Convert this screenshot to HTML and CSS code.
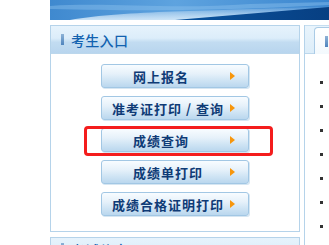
FILE: index.html
```html
<!DOCTYPE html>
<html lang="zh-CN">
<head>
<meta charset="utf-8">
<title>考生入口</title>
<link rel="stylesheet" href="styles.css">
</head>
<body>
<div class="page">
  <div class="banner">
    <svg width="279" height="20" viewBox="0 0 279 20" preserveAspectRatio="none">
      <defs>
        <linearGradient id="sky" x1="0" y1="0" x2="1" y2="0">
          <stop offset="0" stop-color="#3f89cf"/>
          <stop offset="0.45" stop-color="#5ea3df"/>
          <stop offset="1" stop-color="#3b86cf"/>
        </linearGradient>
        <linearGradient id="glow" x1="0" y1="0" x2="0" y2="1">
          <stop offset="0" stop-color="#ffffff" stop-opacity="0"/>
          <stop offset="1" stop-color="#d9ecfa" stop-opacity="0.9"/>
        </linearGradient>
        <linearGradient id="navy" x1="0" y1="0" x2="1" y2="0">
          <stop offset="0" stop-color="#0b55a0"/>
          <stop offset="1" stop-color="#073f82"/>
        </linearGradient>
      </defs>
      <rect width="279" height="20" fill="url(#sky)"/>
      <path d="M0 6 C60 2 120 10 200 4 L279 2 L279 5 C200 9 120 12 0 9 Z" fill="#8cc2ee" opacity="0.45"/>
      <path d="M20 20 C80 10 150 12 279 6 L279 20 Z" fill="url(#glow)"/>
      <path d="M125 20 L279 7 L279 20 Z" fill="url(#navy)"/>
    </svg>
  </div>
  <div class="main">
    <div class="leftcol">
      <section class="panel">
        <div class="panel-head"><span class="bar"></span><h2 class="panel-title">考生入口</h2></div>
        <div class="panel-body">
          <a class="btn" href="#"><span class="btn-text">网上报名</span><i class="arrow"></i></a>
          <a class="btn btn-wide" href="#"><span class="btn-text">准考证打印 / 查询</span><i class="arrow"></i></a>
          <a class="btn btn-marked" href="#"><span class="btn-text">成绩查询</span><i class="arrow"></i><span class="mark"></span></a>
          <a class="btn" href="#"><span class="btn-text">成绩单打印</span><i class="arrow"></i></a>
          <a class="btn btn-wide" href="#"><span class="btn-text">成绩合格证明打印</span><i class="arrow"></i></a>
        </div>
      </section>
      <section class="panel panel-next">
        <div class="panel-head"><span class="bar"></span><h2 class="panel-title">考试信息</h2></div>
      </section>
    </div>
    <div class="rightcol">
      <div class="tabs">
        <div class="tab"><span class="bar"></span><span class="tab-text">最新公告</span></div>
      </div>
      <ul class="news">
        <li>考试通知</li>
        <li>考试通知</li>
        <li>考试通知</li>
        <li>考试通知</li>
        <li>考试通知</li>
        <li>考试通知</li>
        <li>考试通知</li>
      </ul>
    </div>
  </div>
</div>
</body>
</html>
```
FILE: styles.css
```css
html, body {
  margin: 0;
  padding: 0;
  background: #ffffff;
  overflow: hidden;
}
body {
  font-family: "Noto Sans CJK SC", "Noto Sans", sans-serif;
  width: 329px;
  height: 245px;
}
.page {
  margin-left: 50px;
  width: 279px;
}
.banner {
  height: 20px;
  line-height: 0;
}
.banner svg { display: block; }
.main {
  display: flex;
  margin-top: 5px;
  align-items: flex-start;
}
.leftcol {
  width: 250px;
  flex: none;
}
.panel {
  border: 1px solid #b5d3ea;
  background: #ffffff;
}
.panel-head {
  height: 27px;
  display: flex;
  align-items: center;
  background: linear-gradient(#e6f3fc 0%, #dcedfa 45%, #c2dcf1 60%, #b8d5ee 100%);
  border-bottom: 1px solid #bcd7ec;
}
.bar {
  display: block;
  width: 3px;
  height: 11px;
  margin-left: 10px;
  background: linear-gradient(#8db2d6, #4f84bd);
  flex: none;
}
.panel-title {
  margin: 0 0 0 7px;
  font-size: 14px;
  font-weight: 500;
  color: #1262b0;
  line-height: 1;
  letter-spacing: 0.3px;
}
.panel-body {
  padding: 10px 0 15px;
  display: flex;
  flex-direction: column;
  gap: 8px;
}
.btn {
  position: relative;
  display: flex;
  align-items: center;
  box-sizing: border-box;
  width: 148px;
  height: 24px;
  margin: 0 auto;
  padding-left: 31px;
  border: 1px solid #a2c7e4;
  border-radius: 3px;
  background: linear-gradient(#f8fcff 0%, #e6f1fa 40%, #cfe4f4 70%, #bad7ee 100%);
  box-shadow: 1px 1px 0 #d6e6f2;
  text-decoration: none;
}
.btn-wide {
  padding-left: 10px;
}
.btn-text {
  font-size: 13px;
  font-weight: bold;
  color: #0f3b76;
  letter-spacing: 1px;
  line-height: 1;
  white-space: nowrap;
}
.arrow {
  display: block;
  width: 0;
  height: 0;
  margin-left: auto;
  margin-right: 13px;
  border-left: 5px solid #f7960c;
  border-top: 4px solid transparent;
  border-bottom: 4px solid transparent;
}
.mark {
  position: absolute;
  left: -18px;
  top: -3px;
  width: 189px;
  height: 30px;
  box-sizing: border-box;
  border: 3px solid #f41d1d;
  border-radius: 4px;
}
.panel-next {
  margin-top: 5px;
  border-bottom: none;
}
.panel-next .panel-head {
  height: 30px;
  border-bottom: none;
  align-items: flex-start;
  padding-top: 5px;
}
.rightcol {
  flex: 1;
  min-width: 0;
  margin-left: 4px;
  border-left: 1px solid #b5d3ea;
  height: 220px;
  overflow: hidden;
}
.tabs {
  height: 27px;
  border-top: 1px solid #c6def0;
  background: linear-gradient(#e9f4fc, #dcedf9);
  border-bottom: 1px solid #bcd7ec;
  display: flex;
  align-items: flex-end;
  padding-left: 9px;
}
.tab {
  display: flex;
  align-items: center;
  height: 26px;
  margin-bottom: -1px;
  padding-right: 20px;
  border: 1px solid #aacbe6;
  border-bottom: none;
  border-radius: 4px 0 0 0;
  background: linear-gradient(#ffffff, #f3f9fd);
  white-space: nowrap;
}
.tab-text {
  margin-left: 8px;
  font-size: 14px;
  color: #1767b4;
}
.news {
  list-style: none;
  margin: 0;
  padding: 16px 0 0 15px;
}
.news li {
  position: relative;
  display: flex;
  align-items: center;
  height: 24px;
  font-size: 12px;
  color: #333333;
  white-space: nowrap;
  padding-left: 10px;
}
.news li::before {
  content: "";
  position: absolute;
  left: 0;
  top: 11px;
  width: 3px;
  height: 3px;
  background: #333333;
}
```
